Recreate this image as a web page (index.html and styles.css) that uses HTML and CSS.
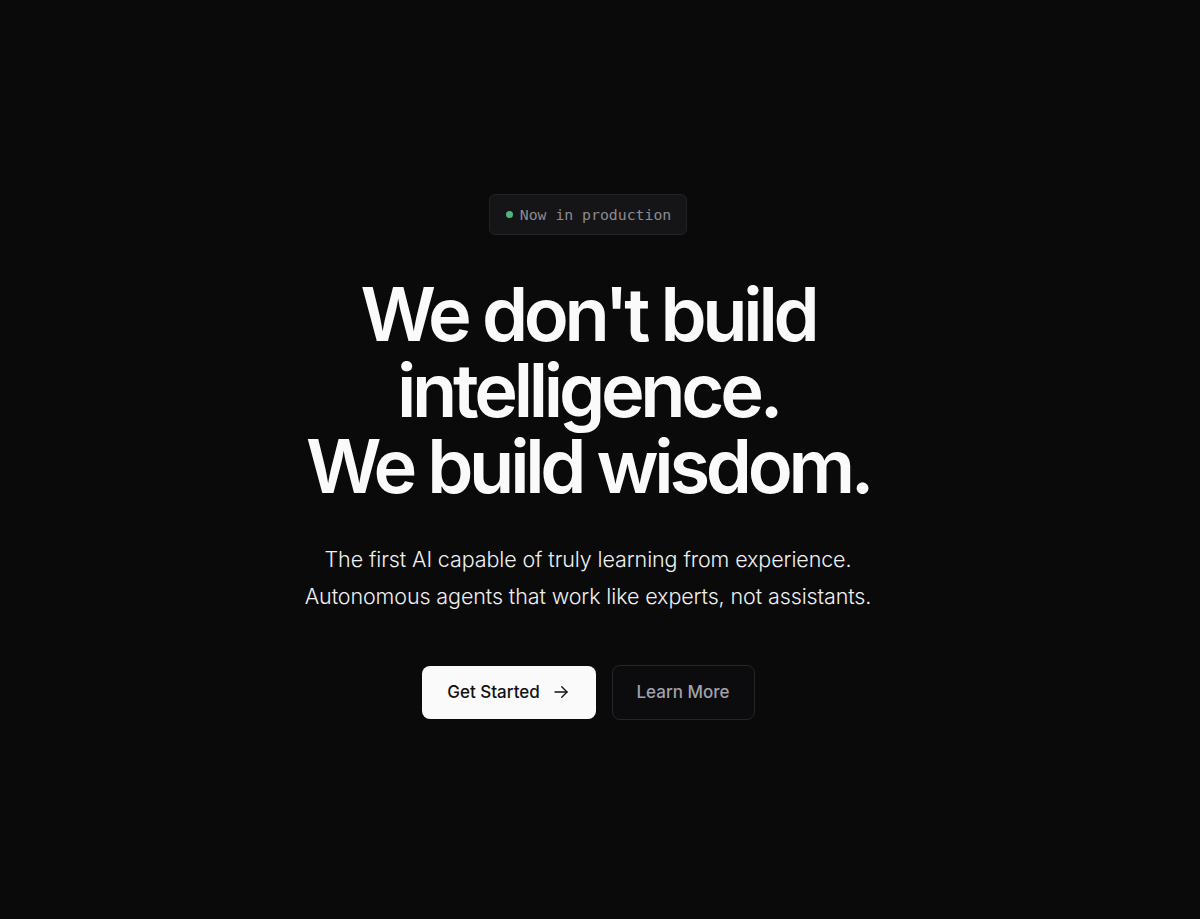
FILE: index.html
```html
<!DOCTYPE html>
<html lang="en">
<head>
<meta charset="utf-8">
<title>Wisdom</title>
<link rel="stylesheet" href="styles.css">
</head>
<body>
<main class="hero">
  <div class="badge"><span class="dot"></span>Now in production</div>
  <h1 class="title">We don't build<br>intelligence.<br>We build wisdom.</h1>
  <p class="subtitle">The first AI capable of truly learning from experience.<br>Autonomous agents that work like experts, not assistants.</p>
  <div class="actions">
    <a class="btn btn-primary" href="#">Get Started
      <svg class="arrow" width="18" height="18" viewBox="0 0 24 24" fill="none" stroke="currentColor" stroke-width="1.8" stroke-linecap="round" stroke-linejoin="round"><path d="M4 12h16"/><path d="M13 5l7 7-7 7"/></svg>
    </a>
    <a class="btn btn-secondary" href="#">Learn More</a>
  </div>
</main>
</body>
</html>
```
FILE: styles.css
```css
* { box-sizing: border-box; }
html, body { margin: 0; padding: 0; }
body {
  background: #0a0a0b;
  color: #fafafa;
  font-family: Inter, "Noto Sans", sans-serif;
}
.hero {
  min-height: 100vh;
  display: flex;
  flex-direction: column;
  align-items: center;
  justify-content: center;
  text-align: center;
  padding: 0 24px 6px 0;
}
.badge {
  display: flex;
  align-items: center;
  gap: 7px;
  height: 41px;
  padding: 0 15px 0 16px;
  border: 1px solid #232326;
  background: #151517;
  border-radius: 6px;
  font-family: "DejaVu Sans Mono", "Liberation Mono", monospace;
  font-size: 14.8px;
  color: #8b8b90;
}
.dot {
  width: 7px;
  height: 7px;
  border-radius: 50%;
  background: #4fb57d;
}
.title {
  margin: 41px 0 0;
  font-size: 74px;
  line-height: 76px;
  font-weight: 600;
  letter-spacing: -0.058em;
  color: #fafafa;
}
.subtitle {
  margin: 37px 0 0;
  font-size: 21.5px;
  line-height: 37px;
  font-weight: 300;
  letter-spacing: -0.005em;
  color: #f0f0f0;
}
.actions {
  display: flex;
  align-items: center;
  gap: 16px;
  margin-top: 50px;
}
.btn {
  display: flex;
  align-items: center;
  justify-content: center;
  text-decoration: none;
  font-size: 17px;
  font-weight: 500;
  border-radius: 8px;
}
.btn-primary {
  width: 174px;
  height: 53px;
  background: #fafafa;
  color: #111113;
  gap: 12px;
}
.btn-secondary {
  width: 143px;
  height: 55px;
  border: 1px solid #26262a;
  background: #0c0c0e;
  color: #a1a1aa;
}
.arrow { display: block; }
```
